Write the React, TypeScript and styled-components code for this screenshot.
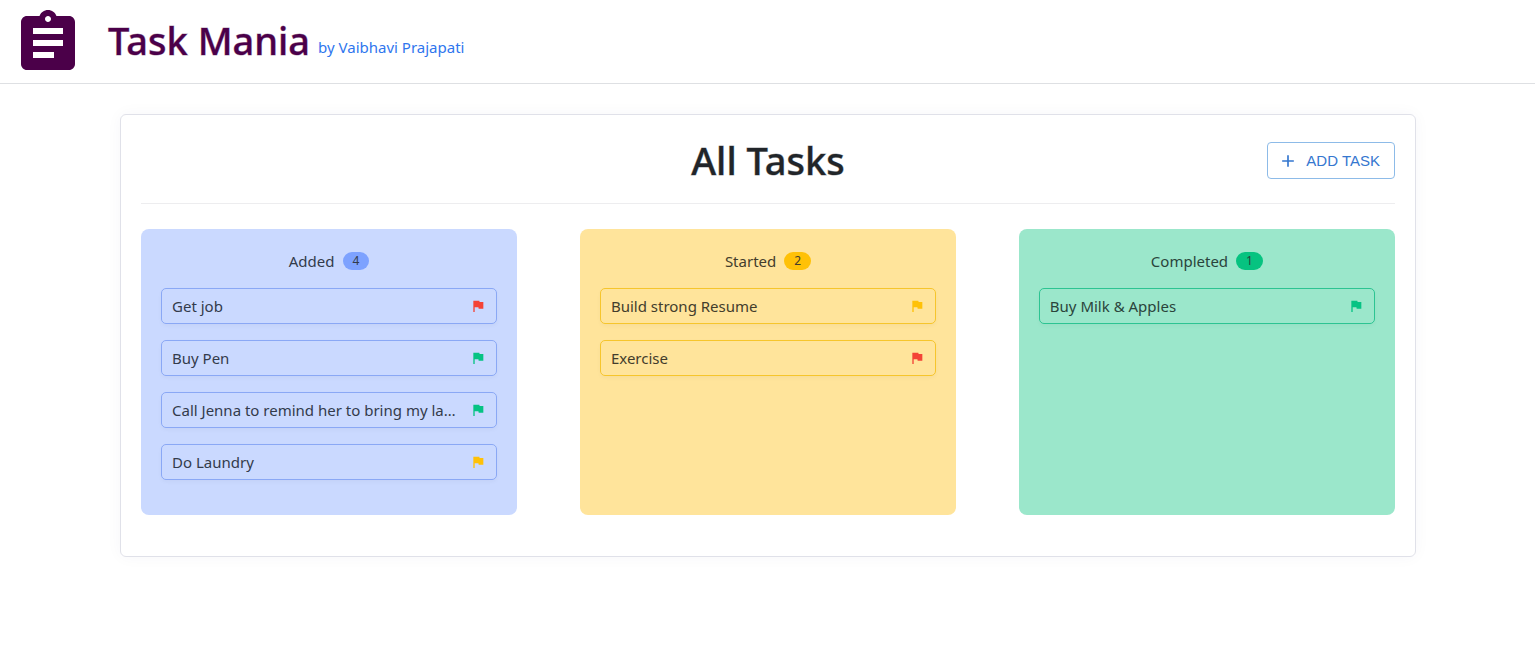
import React from "react";
import styled, { createGlobalStyle } from "styled-components";
import { MdAdd, MdAssignment, MdFlag } from "react-icons/md";

type Status = "added" | "started" | "completed";
type Priority = "high" | "medium" | "low";

interface Task {
  title: string;
  priority: Priority;
}

interface Column {
  status: Status;
  label: string;
  tasks: Task[];
}

const palette: Record<Status, { background: string; accent: string; border: string; text: string }> = {
  added: { background: "#cad9ff", accent: "#7da2ff", border: "#8aa8f5", text: "#333b4b" },
  started: { background: "#ffe49b", accent: "#ffc107", border: "#f6c52c", text: "#433d2c" },
  completed: { background: "#9be7cb", accent: "#06c380", border: "#2cc492", text: "#2a443b" },
};

const flagColors: Record<Priority, string> = {
  high: "#f44336",
  medium: "#ffc107",
  low: "#06c384",
};

const columns: Column[] = [
  {
    status: "added",
    label: "Added",
    tasks: [
      { title: "Get job", priority: "high" },
      { title: "Buy Pen", priority: "low" },
      { title: "Call Jenna to remind her to bring my laptop", priority: "low" },
      { title: "Do Laundry", priority: "medium" },
    ],
  },
  {
    status: "started",
    label: "Started",
    tasks: [
      { title: "Build strong Resume", priority: "medium" },
      { title: "Exercise", priority: "high" },
    ],
  },
  {
    status: "completed",
    label: "Completed",
    tasks: [{ title: "Buy Milk & Apples", priority: "low" }],
  },
];

const GlobalStyle = createGlobalStyle`
  *, *::before, *::after { box-sizing: border-box; }
  body {
    margin: 0;
    background: #fff;
    color: #212529;
    font-family: "Segoe UI", "Noto Sans", "Open Sans", sans-serif;
    font-size: 15px;
    line-height: 24px;
  }
`;

const Header = styled.header`
  display: flex;
  align-items: flex-start;
  gap: 24px;
  padding: 7px 12px 4px;
  border-bottom: 1px solid #dee0e3;
`;

const Logo = styled(MdAssignment)`
  flex: none;
  width: 72px;
  height: 72px;
  color: #4b0049;
`;

const Brand = styled.div`
  display: flex;
  align-items: flex-end;
  gap: 8px;
`;

const BrandName = styled.h1`
  margin: 0;
  color: #4b0049;
  font-size: 38px;
  font-weight: 500;
  line-height: 66px;
  -webkit-text-stroke: 1px rgba(75, 0, 73, 0.4);
`;

const AuthorLink = styled.a`
  color: #2f76ee;
  line-height: 52px;
  text-decoration: none;
`;

const Board = styled.main`
  margin: 30px 119px 30px 120px;
  padding: 20px 20px 41px;
  border: 1px solid #e0e1e9;
  border-radius: 6px;
  box-shadow: 0 0 16px rgba(40, 40, 90, 0.04);
`;

const BoardHeader = styled.div`
  display: grid;
  grid-template-columns: 1fr auto 1fr;
  align-items: center;
  padding-bottom: 17px;
  border-bottom: 1px solid #ededef;
`;

const BoardTitle = styled.h2`
  grid-column: 2;
  margin: 0;
  font-size: 38px;
  font-weight: 500;
  line-height: 51px;
  -webkit-text-stroke: 1px rgba(33, 37, 41, 0.4);
`;

const AddButton = styled.button`
  justify-self: end;
  display: flex;
  align-items: center;
  gap: 8px;
  height: 37px;
  padding: 0 14px 0 10px;
  border: 1px solid #8dbbe8;
  border-radius: 4px;
  background: transparent;
  color: #3577cf;
  font-family: "Liberation Sans", Arial, sans-serif;
  font-size: 15px;
  cursor: pointer;

  svg {
    width: 20px;
    height: 20px;
  }
`;

const Columns = styled.div`
  display: grid;
  grid-template-columns: repeat(3, 30%);
  justify-content: space-between;
  padding-top: 25px;
`;

const ColumnPanel = styled.section<{ $status: Status }>`
  padding: 20px 20px 35px;
  border-radius: 8px;
  background: ${({ $status }) => palette[$status].background};
  color: ${({ $status }) => palette[$status].text};
`;

const ColumnTitle = styled.h3`
  display: flex;
  align-items: center;
  justify-content: center;
  gap: 8px;
  margin: 0 0 15px;
  font-size: 15px;
  font-weight: 400;
  line-height: 24px;
`;

const Count = styled.span<{ $status: Status }>`
  padding: 0 10px;
  border-radius: 9px;
  background: ${({ $status }) => palette[$status].accent};
  font-size: 12px;
  line-height: 18px;
`;

const TaskList = styled.ul`
  display: flex;
  flex-direction: column;
  gap: 16px;
  margin: 0;
  padding: 0;
  list-style: none;
`;

const TaskButton = styled.button<{ $status: Status }>`
  display: flex;
  align-items: center;
  gap: 12px;
  width: 100%;
  height: 36px;
  padding: 0 10px;
  border: 1px solid ${({ $status }) => palette[$status].border};
  border-radius: 5px;
  background: transparent;
  box-shadow: 0 2px 4px rgba(0, 0, 0, 0.03);
  color: inherit;
  font: inherit;
  text-align: left;
  cursor: pointer;
`;

const TaskTitle = styled.span`
  flex: 1;
  min-width: 0;
  overflow: hidden;
  text-overflow: ellipsis;
  white-space: nowrap;
`;

const Flag = styled(MdFlag)<{ $priority: Priority }>`
  flex: none;
  width: 16px;
  height: 16px;
  color: ${({ $priority }) => flagColors[$priority]};
`;

export default function App() {
  return (
    <>
      <GlobalStyle />
      <Header>
        <Logo aria-hidden />
        <Brand>
          <BrandName>Task Mania</BrandName>
          <AuthorLink href="#author">by Vaibhavi Prajapati</AuthorLink>
        </Brand>
      </Header>
      <Board>
        <BoardHeader>
          <BoardTitle>All Tasks</BoardTitle>
          <AddButton type="button">
            <MdAdd aria-hidden />
            ADD TASK
          </AddButton>
        </BoardHeader>
        <Columns>
          {columns.map(({ status, label, tasks }) => (
            <ColumnPanel key={status} $status={status}>
              <ColumnTitle>
                {label}
                <Count $status={status}>{tasks.length}</Count>
              </ColumnTitle>
              <TaskList>
                {tasks.map((task) => (
                  <li key={task.title}>
                    <TaskButton type="button" $status={status}>
                      <TaskTitle>{task.title}</TaskTitle>
                      <Flag $priority={task.priority} aria-hidden />
                    </TaskButton>
                  </li>
                ))}
              </TaskList>
            </ColumnPanel>
          ))}
        </Columns>
      </Board>
    </>
  );
}
